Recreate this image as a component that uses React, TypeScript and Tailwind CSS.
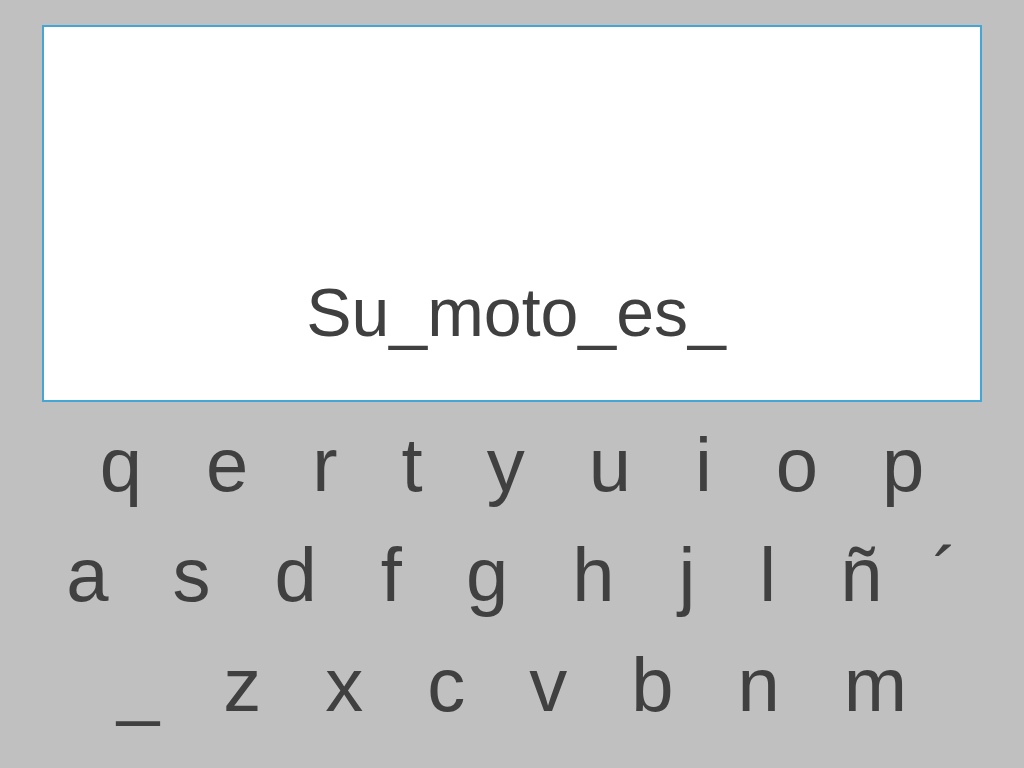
import React from "react";

const rows: string[][] = [
  ["q", "e", "r", "t", "y", "u", "i", "o", "p"],
  ["a", "s", "d", "f", "g", "h", "j", "l", "ñ", "´"],
  ["_", "z", "x", "c", "v", "b", "n", "m"],
];

export default function App() {
  return (
    <div className="w-full h-[768px] bg-[#c0c0c0] pt-[25px] px-[42px] font-['Liberation_Sans',Arial,sans-serif] text-[#404040]">
      <div className="h-[377px] bg-white border-2 border-[#45a6d6] flex items-end justify-center pb-[54px] pl-[8px]">
        <span className="text-[68px] leading-none">Su_moto_es_</span>
      </div>
      <div className="mt-[8px] flex flex-col">
        {rows.map((row, i) => (
          <div key={i} className="h-[110px] flex justify-center gap-[64px] text-[76px] leading-[110px]">
            {row.map((k) => (
              <span key={k} className={k === "´" ? "-ml-[14px]" : ""}>
                {k}
              </span>
            ))}
          </div>
        ))}
      </div>
    </div>
  );
}
